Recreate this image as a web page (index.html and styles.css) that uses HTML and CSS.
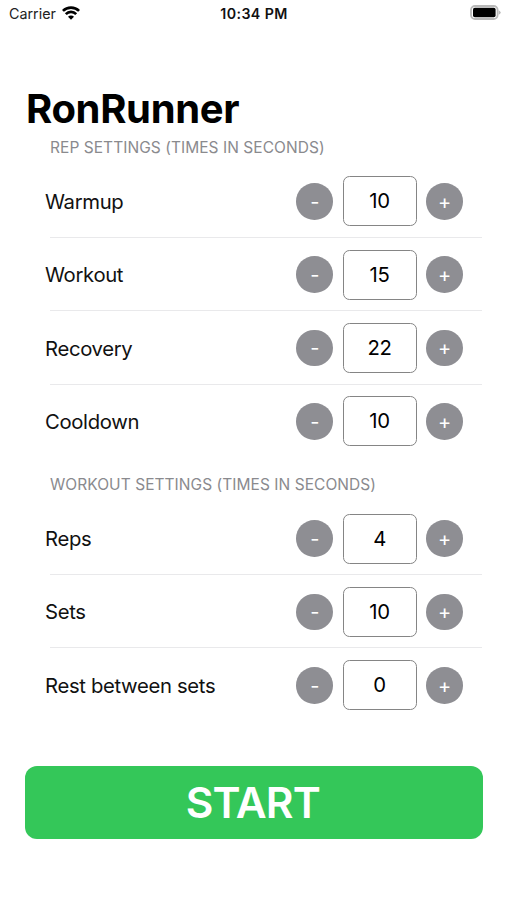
FILE: index.html
```html
<!DOCTYPE html>
<html lang="en">
<head>
<meta charset="utf-8">
<title>RonRunner</title>
<link rel="stylesheet" href="styles.css">
</head>
<body>
<header class="status">
  <div class="carrier"><span>Carrier</span>
    <svg class="wifi" width="18" height="14" viewBox="0 0 18 14" fill="none" stroke="#000" stroke-width="2.7"><path d="M.9 4.9a11.5 11.5 0 0 1 16.2 0"/><path d="M3.8 8.1a7.35 7.35 0 0 1 10.4 0"/><path d="M9 13.8 6 10.8a4.2 4.2 0 0 1 6 0z" fill="#000" stroke="none"/></svg>
  </div>
  <time class="clock">10:34 PM</time>
  <svg class="battery" width="32" height="16" viewBox="0 0 32 16"><rect x="1" y="1" width="26.6" height="13" rx="4" fill="#fff" stroke="#b9b9b9" stroke-width="1.8"/><rect x="3" y="2.7" width="22.6" height="9.6" rx="1.8"/><path d="M28.7 5.2q4 2.3 0 4.6z" fill="#b9b9b9"/></svg>
</header>
<main>
  <h1 class="title">RonRunner</h1>
  <section class="section">
    <h2 class="heading">REP SETTINGS (TIMES IN SECONDS)</h2>
    <div class="row"><span class="label">Warmup</span><button class="step">-</button><output class="value">10</output><button class="step">+</button></div>
    <div class="row"><span class="label">Workout</span><button class="step">-</button><output class="value">15</output><button class="step">+</button></div>
    <div class="row"><span class="label">Recovery</span><button class="step">-</button><output class="value">22</output><button class="step">+</button></div>
    <div class="row"><span class="label">Cooldown</span><button class="step">-</button><output class="value">10</output><button class="step">+</button></div>
  </section>
  <section class="section">
    <h2 class="heading second">WORKOUT SETTINGS (TIMES IN SECONDS)</h2>
    <div class="row"><span class="label">Reps</span><button class="step">-</button><output class="value">4</output><button class="step">+</button></div>
    <div class="row"><span class="label">Sets</span><button class="step">-</button><output class="value">10</output><button class="step">+</button></div>
    <div class="row"><span class="label">Rest between sets</span><button class="step">-</button><output class="value">0</output><button class="step">+</button></div>
  </section>
  <button class="start">START</button>
</main>
</body>
</html>
```
FILE: styles.css
```css
* { box-sizing: border-box; }
body {
  margin: 0;
  height: 900px;
  overflow: hidden;
  background: #fff;
  color: #000;
  font-family: Inter, "Liberation Sans", sans-serif;
}
button { border: 0; padding: 0; font-family: inherit; color: #fff; }
.status {
  display: grid;
  grid-template-columns: 1fr auto 1fr;
  align-items: center;
  height: 27px;
  padding: 0 5px 0 9px;
}
.carrier { display: flex; align-items: center; gap: 6px; font-size: 14.3px; color: #222; }
.wifi { margin-top: -2px; }
.clock { font-size: 14.2px; font-weight: 600; letter-spacing: 0.4px; color: #111; margin-right: 3px; }
.battery { justify-self: end; margin-top: -1px; }
main { padding: 0 25px; }
.title {
  margin: 56.5px 0 0 1px;
  height: 51px;
  line-height: 50px;
  font-size: 40px;
  font-weight: 700;
  letter-spacing: -0.35px;
}
.heading {
  margin: 0 0 0 25px;
  height: 30.3px;
  padding-top: 3px;
  line-height: 20px;
  font-size: 15.5px;
  font-weight: 400;
  letter-spacing: 0.05px;
  color: #8a8a8e;
}
.heading.second { height: 44px; padding-top: 17px; }
.row {
  display: grid;
  grid-template-columns: 1fr 36.6px 74px 36.6px;
  column-gap: 9.6px;
  align-items: center;
  height: 73.3px;
  padding: 0 19.2px 0 20px;
  background: linear-gradient(#e9e9eb, #e9e9eb) 25px 100% / 432px 1.2px no-repeat;
}
.row:last-child { background: none; }
.label { font-size: 20.3px; letter-spacing: -0.34px; color: #111; }
.step {
  width: 36.6px;
  height: 36.6px;
  border-radius: 50%;
  background: #8e8e93;
  font-size: 20px;
  line-height: 36px;
  padding-top: 0.6px;
}
.value {
  height: 50px;
  border: 1.3px solid #858585;
  border-radius: 6.5px;
  font-size: 20.3px;
  letter-spacing: -0.2px;
  line-height: 48.8px;
  text-align: center;
}
.start {
  display: block;
  width: 457.5px;
  height: 73px;
  margin-top: 44.2px;
  padding-right: 2px;
  border-radius: 12px;
  background: #34c759;
  font-size: 42.5px;
  font-weight: 600;
  letter-spacing: -0.9px;
  line-height: 73px;
}
```
